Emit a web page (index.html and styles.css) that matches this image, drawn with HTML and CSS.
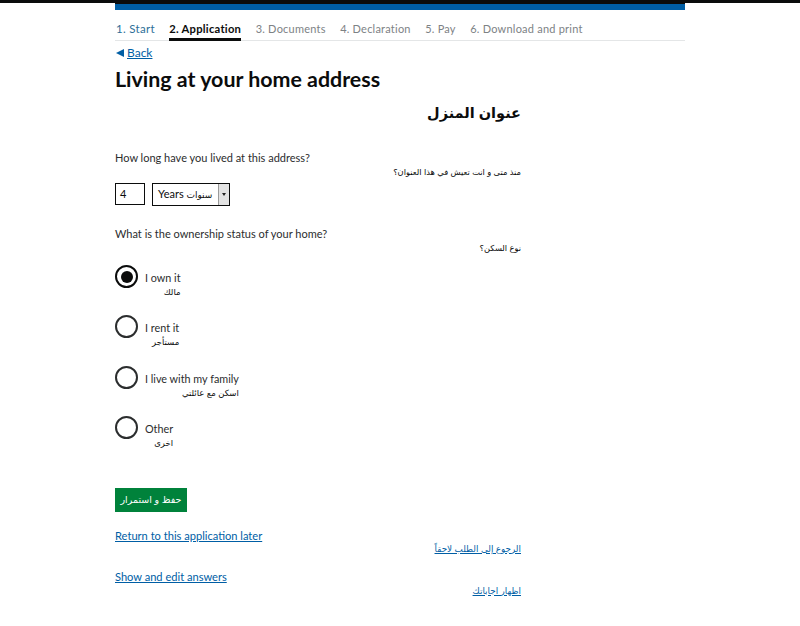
FILE: index.html
```html
<!DOCTYPE html>
<html lang="en">
<head>
    <meta charset="UTF-8">
    <meta name="viewport" content="width=device-width, initial-scale=1.0">
    <title>Living at your home address</title>
    <link rel="stylesheet" href="styles.css">
</head>
<body>
    <div class="top-bar"></div>
    <div class="page">
        <div class="blue-bar"></div>

        <ol class="steps">
            <li class="done">1. Start</li>
            <li class="current">2. Application</li>
            <li>3. Documents</li>
            <li>4. Declaration</li>
            <li>5. Pay</li>
            <li>6. Download and print</li>
        </ol>

        <a class="back" href="#"><span class="back-arrow"></span><span class="back-text">Back</span></a>

        <h1>Living at your home address</h1>

        <div class="content">
            <h2 class="ar" dir="rtl">عنوان المنزل</h2>

            <p class="question">How long have you lived at this address?</p>
            <p class="ar ar-note" dir="rtl">منذ متى و انت تعيش في هذا العنوان؟</p>

            <div class="duration">
                <div class="num-box">4</div>
                <div class="select-box">
                    <span class="select-text">Years <span class="ar-inline">سنوات</span></span>
                    <span class="select-btn"></span>
                </div>
            </div>

            <p class="question question-tight">What is the ownership status of your home?</p>
            <p class="ar ar-note" dir="rtl">نوع السكن؟</p>

            <div class="radios">
                <div class="radio-row">
                    <span class="radio checked"></span>
                    <div class="radio-label">I own it<span class="ar-sub">مالك</span></div>
                </div>
                <div class="radio-row">
                    <span class="radio"></span>
                    <div class="radio-label">I rent it<span class="ar-sub">مستأجر</span></div>
                </div>
                <div class="radio-row">
                    <span class="radio"></span>
                    <div class="radio-label">I live with my family<span class="ar-sub">اسكن مع عائلتي</span></div>
                </div>
                <div class="radio-row">
                    <span class="radio"></span>
                    <div class="radio-label">Other<span class="ar-sub">اخرى</span></div>
                </div>
            </div>

            <button class="save" dir="rtl">حفظ و استمرار</button>

            <div class="link-block">
                <a class="link" href="#">Return to this application later</a>
                <p class="ar ar-link" dir="rtl"><a href="#">الرجوع إلى الطلب لاحقاً</a></p>
            </div>
            <div class="link-block">
                <a class="link" href="#">Show and edit answers</a>
                <p class="ar ar-link ar-link-low" dir="rtl"><a href="#">اظهار اجاباتك</a></p>
            </div>
        </div>
    </div>
</body>
</html>
```

FILE: styles.css
```css
* {
    box-sizing: border-box;
}
body {
    margin: 0;
    background: #fff;
    color: #0b0c0c;
    font-family: Lato, "Liberation Sans", sans-serif;
    font-size: 11px;
}
p {
    margin: 0;
}
.top-bar {
    height: 3px;
    background: #0b0c0c;
}
.page {
    width: 570px;
    margin-left: 115px;
}
.blue-bar {
    height: 7px;
    background: #005ea5;
    border-top: 1px solid #0b0c0c;
}
.steps {
    display: flex;
    gap: 14.5px;
    margin: 0;
    padding: 11px 0 0 1px;
    height: 31px;
    list-style: none;
    border-bottom: 1px solid #e4e6e7;
    color: #7d8285;
    font-size: 11px;
    letter-spacing: 0.22px;
}
.steps li {
    height: 20px;
    line-height: 15px;
}
.steps .done {
    color: #2e6f98;
    font-size: 11.5px;
    letter-spacing: 0.3px;
}
.steps .current {
    color: #0b0c0c;
    font-weight: 700;
    font-size: 11.2px;
    letter-spacing: 0.25px;
    border-bottom: 3px solid #0b0c0c;
}
.back {
    display: flex;
    align-items: center;
    gap: 3px;
    margin-top: 4px;
    height: 15px;
    color: #005ea5;
    font-size: 12px;
    text-decoration: none;
}
.back-arrow {
    width: 0;
    height: 0;
    border-top: 4.5px solid transparent;
    border-bottom: 4.5px solid transparent;
    border-right: 8px solid #005ea5;
    margin-left: 1px;
}
.back-text {
    text-decoration: underline;
}
h1 {
    margin: 6px 0 0;
    font-size: 21.4px;
    line-height: 26px;
    font-weight: 700;
}
.content {
    width: 406px;
}
.ar {
    font-family: "Liberation Sans", "DejaVu Sans", sans-serif;
}
h2.ar {
    margin: 9px 0 0;
    font-size: 14.5px;
    line-height: 24px;
    font-weight: 700;
}
.question {
    margin-top: 25px;
    font-size: 11px;
    line-height: 16px;
    color: #2b2d2e;
}
.question-tight {
    margin-top: 20px;
}
.ar-note {
    margin-top: 0;
    font-size: 8.3px;
    line-height: 13px;
}
.duration {
    display: flex;
    gap: 7px;
    margin-top: 4px;
}
.num-box {
    width: 30px;
    height: 22px;
    border: 1px solid #0b0c0c;
    padding-left: 4px;
    line-height: 20px;
    font-size: 11px;
}
.select-box {
    display: flex;
    width: 78px;
    height: 23px;
    border: 1px solid #0b0c0c;
}
.select-text {
    flex: 1;
    padding-left: 5px;
    line-height: 20px;
    font-size: 11px;
}
.ar-inline {
    font-family: "Liberation Sans", "DejaVu Sans", sans-serif;
    font-size: 9px;
}
.select-btn {
    position: relative;
    width: 11px;
    background: #e3e3e3;
    border-left: 1px solid #9a9a9a;
}
.select-btn::after {
    content: "";
    position: absolute;
    top: 9px;
    left: 3px;
    border-top: 3px solid #222;
    border-left: 2px solid transparent;
    border-right: 2px solid transparent;
}
.radios {
    margin-top: 10px;
}
.radio-row {
    display: flex;
    gap: 7px;
    height: 50.4px;
}
.radio {
    position: relative;
    width: 23px;
    height: 23px;
    border: 2px solid #2b2d2e;
    border-radius: 50%;
    flex: none;
}
.radio.checked {
    border-color: #0b0c0c;
}
.radio.checked::after {
    content: "";
    position: absolute;
    top: 3.5px;
    left: 3.5px;
    width: 12px;
    height: 12px;
    border-radius: 50%;
    background: #0b0c0c;
}
.radio-label {
    display: inline-flex;
    flex-direction: column;
    padding-top: 6px;
    font-size: 10.8px;
    line-height: 14px;
    color: #2b2d2e;
}
.ar-sub {
    align-self: flex-end;
    font-family: "Liberation Sans", "DejaVu Sans", sans-serif;
    font-size: 8.5px;
    line-height: 14px;
    color: #0b0c0c;
}
.save {
    display: block;
    width: 72px;
    height: 24px;
    margin-top: 21px;
    padding: 0;
    border: none;
    background: #00823b;
    color: #fff;
    font-family: "Liberation Sans", "DejaVu Sans", sans-serif;
    font-size: 9.5px;
    text-align: center;
}
.link-block {
    margin-top: 16px;
}
.link-block + .link-block {
    margin-top: 13px;
}
.link {
    display: block;
    font-size: 11.1px;
    line-height: 15px;
    color: #005ea5;
}
.ar-link {
    font-size: 8.8px;
    line-height: 13px;
}
.ar-link-low {
    margin-top: 1px;
}
.ar-link a {
    color: #005ea5;
}
```
